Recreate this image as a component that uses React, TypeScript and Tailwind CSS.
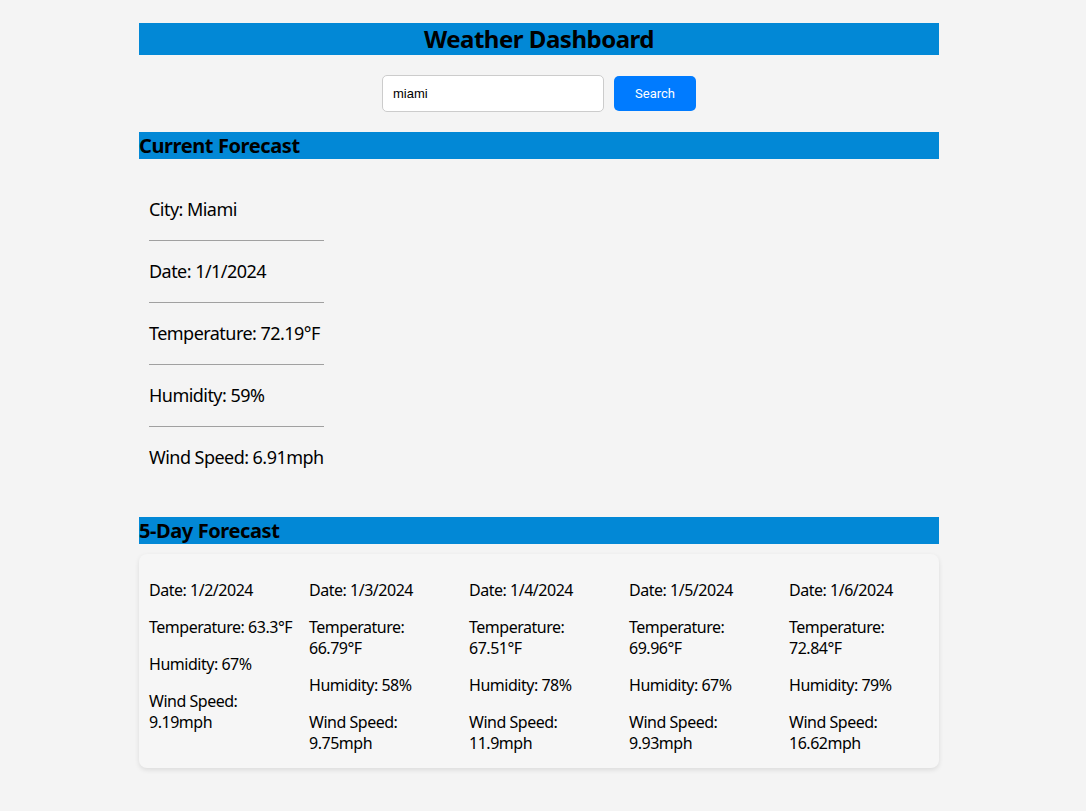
import React, { useState } from 'react';

const current = [
  'City: Miami',
  'Date: 1/1/2024',
  'Temperature: 72.19°F',
  'Humidity: 59%',
  'Wind Speed: 6.91mph',
];

const days = [
  { date: '1/2/2024', temp: '63.3', hum: '67', wind: '9.19' },
  { date: '1/3/2024', temp: '66.79', hum: '58', wind: '9.75' },
  { date: '1/4/2024', temp: '67.51', hum: '78', wind: '11.9' },
  { date: '1/5/2024', temp: '69.96', hum: '67', wind: '9.93' },
  { date: '1/6/2024', temp: '72.84', hum: '79', wind: '16.62' },
];

const App = () => {
  const [city, setCity] = useState('miami');

  return (
    <div className="min-h-screen bg-[#f4f4f4] pr-2 pt-[23px] text-black font-['Noto_Sans',sans-serif]">
      <div className="mx-auto w-[800px]">
        <h1 className="h-8 bg-[#0288d6] text-center text-2xl font-bold leading-8 tracking-[-0.02em]">Weather Dashboard</h1>

        <div className="mt-5 flex items-center justify-center gap-[10px]">
          <input
            value={city}
            onChange={(e) => setCity(e.target.value)}
            className="h-[37px] w-[222px] rounded-[5px] border border-[#ccc] bg-white px-[10px] text-[13px] font-['Liberation_Sans',sans-serif] outline-none"
          />
          <button className="h-[35px] w-[82px] rounded-[5px] bg-[#007bff] text-[13px] text-white font-['Roboto',sans-serif]">
            Search
          </button>
        </div>

        <h2 className="mt-5 h-[27px] bg-[#0288d6] text-xl font-bold leading-[27px] tracking-[-0.02em]">Current Forecast</h2>
        <ul className="w-fit divide-y divide-[#a0a0a0] px-[10px] py-[20px] text-lg tracking-[-0.03em]">
          {current.map((c) => (
            <li key={c} className="py-[18px] leading-[25px]">{c}</li>
          ))}
        </ul>

        <h2 className="mt-[9px] h-[27px] bg-[#0288d6] text-xl font-bold leading-[27px] tracking-[-0.02em]">5-Day Forecast</h2>
        <div className="mt-[10px] rounded-lg bg-[#f6f6f6] px-[10px] pb-[14px] pt-[26px] shadow-[0_2px_5px_rgba(0,0,0,0.1)]">
          <div className="grid grid-cols-[repeat(5,146px)] gap-x-[14px]">
            {days.map((d) => (
              <div key={d.date} className="flex flex-col gap-4 text-base leading-[21px] tracking-[-0.03em]">
                <p>Date: {d.date}</p>
                <p>Temperature: {d.temp}°F</p>
                <p>Humidity: {d.hum}%</p>
                <p>Wind Speed: {d.wind}mph</p>
              </div>
            ))}
          </div>
        </div>
      </div>
    </div>
  );
};

export default App;
